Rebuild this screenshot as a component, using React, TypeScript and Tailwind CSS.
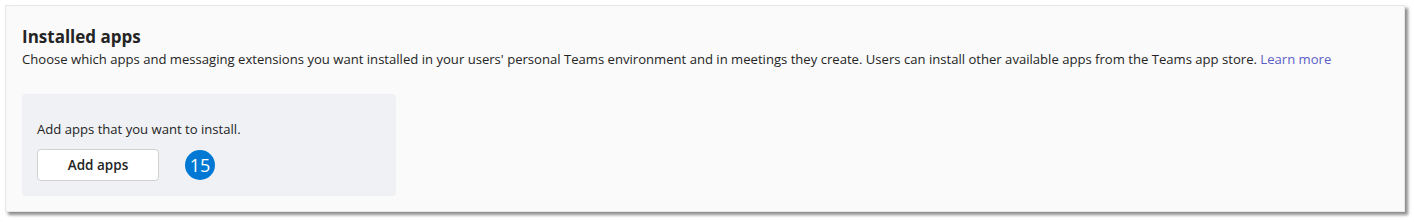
export default function App() {
  return (
    <div
      className="w-[1414px] h-[222px] bg-white pl-[5px] pt-[5px]"
      style={{ fontFamily: '"Segoe UI", "Open Sans", "Noto Sans", sans-serif' }}
    >
      <div className="w-[1400px] h-[207px] bg-[#fafafa] border border-[#e6e6e6] shadow-[3px_3px_3px_rgba(0,0,0,0.45)] pl-[16px] pt-[19px]">
        <h1 className="text-[17px] leading-[24px] font-bold text-[#242424]">Installed apps</h1>
        <p className="text-[13.1px] leading-[20px] text-[#242424] whitespace-nowrap">
          Choose which apps and messaging extensions you want installed in your users' personal Teams environment and in meetings they create. Users can install other available apps from the Teams app store.{' '}
          <a className="text-[#5b5fc7]">Learn more</a>
        </p>
        <div className="mt-[25px] w-[374px] h-[102px] bg-[#f0f1f5] rounded-[4px] pl-[15px] pt-[25px]">
          <p className="text-[13.1px] leading-[20px] text-[#242424]">Add apps that you want to install.</p>
          <div className="mt-[10px] flex items-center gap-[26px]">
            <button className="w-[122px] h-[32px] bg-white border border-[#d1d1d1] rounded-[4px] text-[13.5px] font-semibold text-[#242424]">
              Add apps
            </button>
            <span className="w-[30px] h-[30px] rounded-full bg-[#0078d4] text-white text-[18px] font-medium flex items-center justify-center">
              15
            </span>
          </div>
        </div>
      </div>
    </div>
  );
}
